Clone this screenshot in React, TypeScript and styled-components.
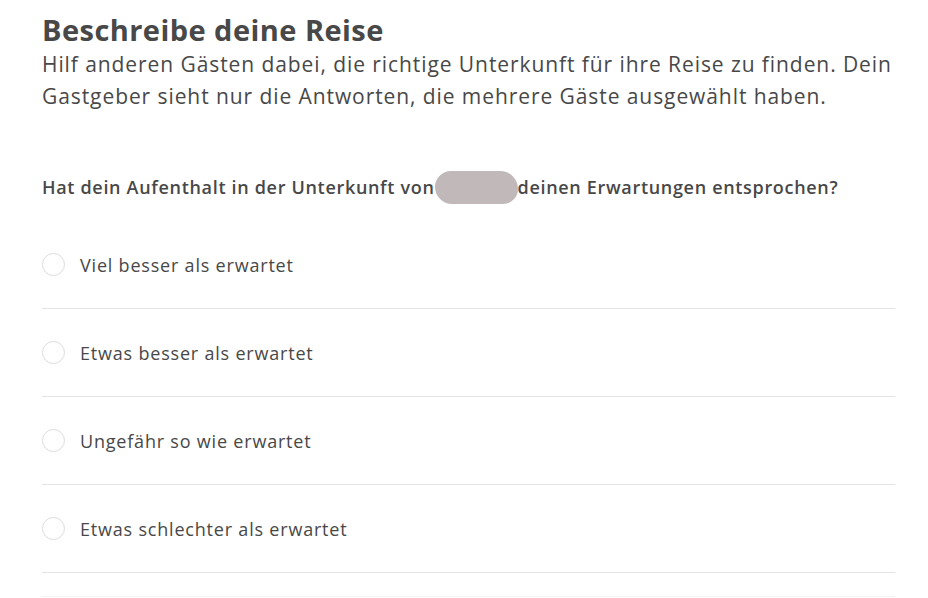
import * as React from 'react'
import styled, { createGlobalStyle } from 'styled-components'

const GlobalStyle = createGlobalStyle`
  html, body {
    margin: 0;
    padding: 0;
    background: #ffffff;
  }
  body {
    font-family: 'Open Sans', 'Noto Sans', sans-serif;
    color: #484848;
  }
`

const Page = styled.div`
  width: 853px;
  padding: 12px 0 0 42px;
`
const Title = styled.h1`
  margin: 0;
  font-size: 29px;
  line-height: 36px;
  font-weight: 700;
  letter-spacing: 0.45px;
  color: #484848;
`
const Intro = styled.p`
  margin: 0;
  font-size: 21px;
  line-height: 32px;
  font-weight: 400;
  letter-spacing: 0.92px;
  color: #484848;
`
const Question = styled.div`
  margin-top: 58px;
  font-size: 18px;
  line-height: 34px;
  font-weight: 600;
  letter-spacing: 0.68px;
  color: #484848;
  display: flex;
  align-items: center;
`
const Hidden = styled.span`
  display: inline-block;
  width: 83px;
  height: 33px;
  border-radius: 16px 18px 15px 17px;
  background: #c0b8b9;
`
const Options = styled.div`
  margin-top: 17px;
`
const Option = styled.label`
  display: flex;
  align-items: center;
  gap: 15px;
  height: 87px;
  border-bottom: 1px solid #e4e4e4;
  cursor: pointer;
`
const Radio = styled.span`
  flex: none;
  width: 21px;
  height: 21px;
  border: 1px solid #dcdcdc;
  border-radius: 50%;
  background: #fff;
`
const OptionText = styled.span`
  font-size: 18px;
  letter-spacing: 0.8px;
  color: #484848;
`
const Fade = styled.div`
  margin-top: 23px;
  border-top: 1px solid #f3f3f3;
`

const answers = [
  'Viel besser als erwartet',
  'Etwas besser als erwartet',
  'Ungefähr so wie erwartet',
  'Etwas schlechter als erwartet',
]

export default function App() {
  return (
    <Page>
      <GlobalStyle />
      <Title>Beschreibe deine Reise</Title>
      <Intro>
        Hilf anderen Gästen dabei, die richtige Unterkunft für ihre Reise zu finden. Dein
        Gastgeber sieht nur die Antworten, die mehrere Gäste ausgewählt haben.
      </Intro>
      <Question>
        Hat dein Aufenthalt in der Unterkunft von<Hidden />deinen Erwartungen entsprochen?
      </Question>
      <Options>
        {answers.map(a => (
          <Option key={a}>
            <Radio />
            <OptionText>{a}</OptionText>
          </Option>
        ))}
      </Options>
      <Fade />
    </Page>
  )
}
